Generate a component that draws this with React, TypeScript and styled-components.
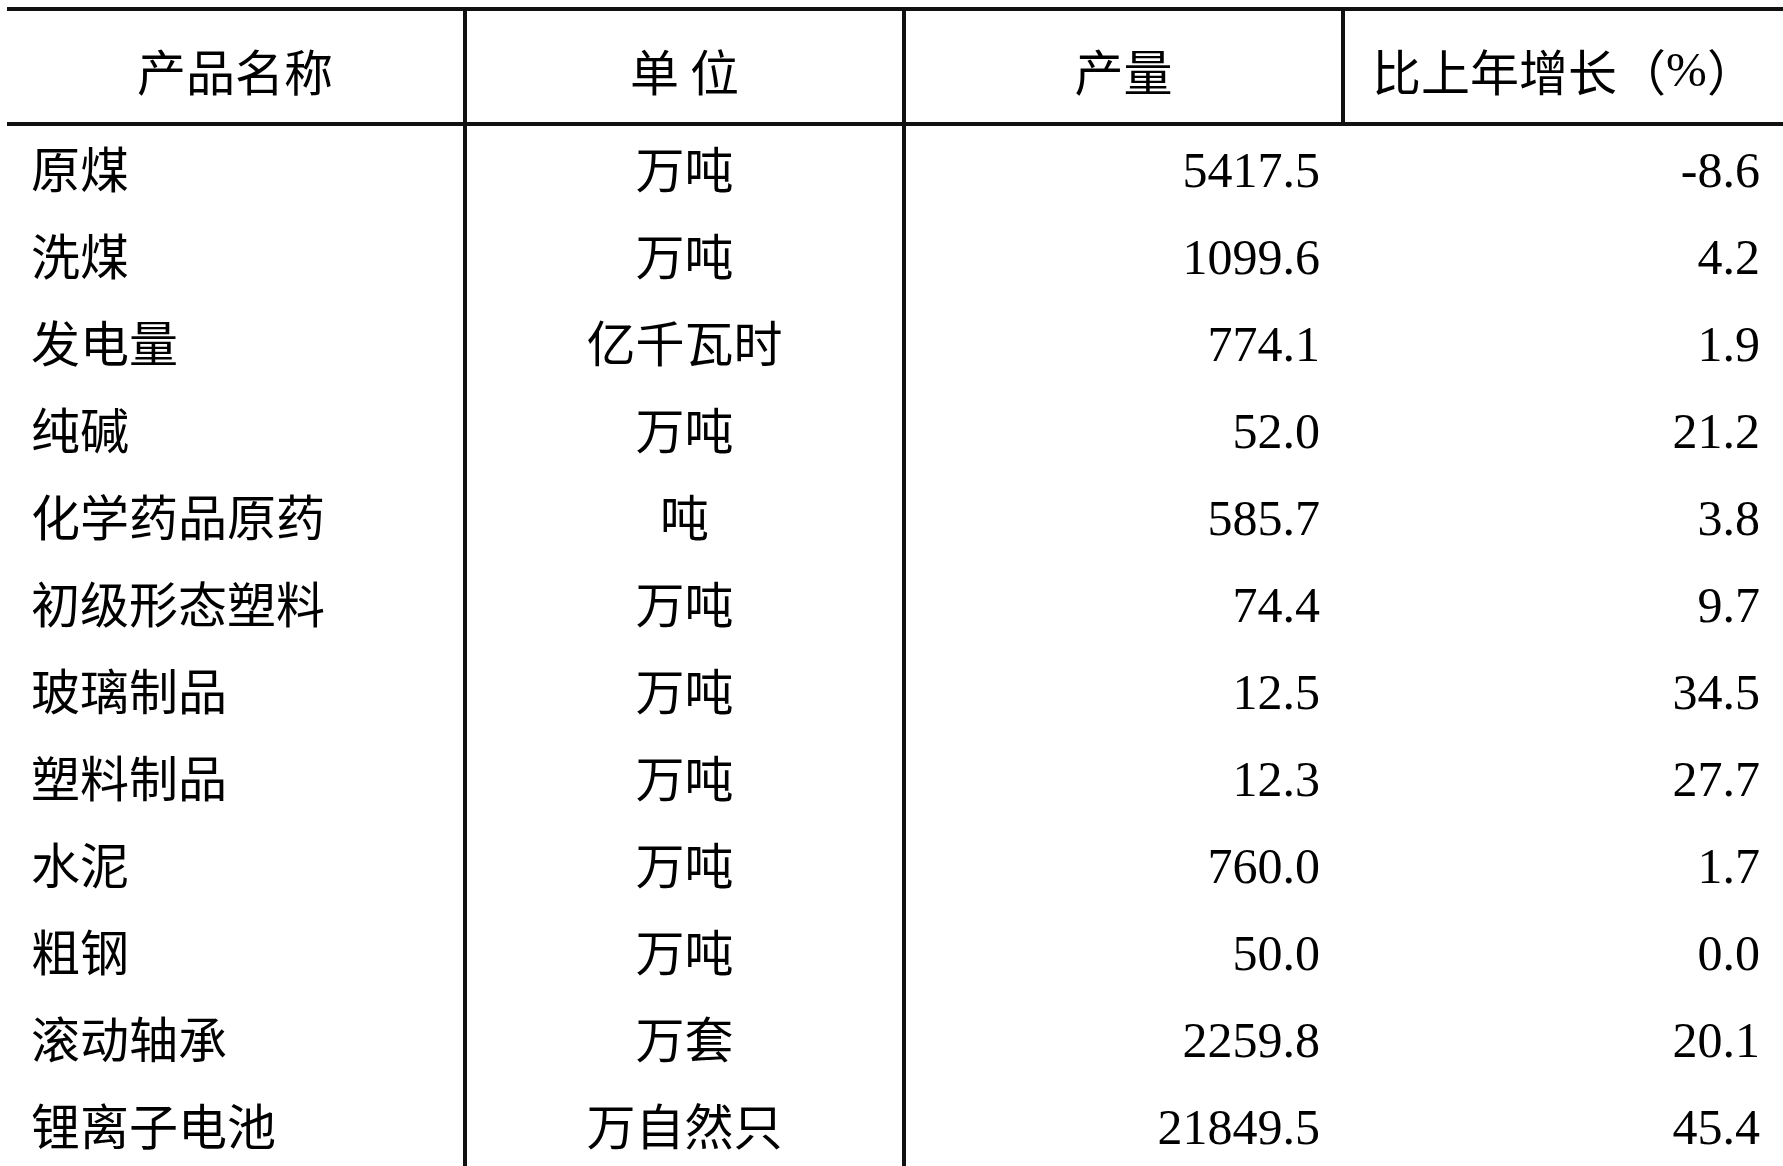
import * as React from "react";
import styled, { createGlobalStyle } from "styled-components";

const LINE = "#111";

const rows: [string, string, string, string][] = [
  ["原煤", "万吨", "5417.5", "-8.6"],
  ["洗煤", "万吨", "1099.6", "4.2"],
  ["发电量", "亿千瓦时", "774.1", "1.9"],
  ["纯碱", "万吨", "52.0", "21.2"],
  ["化学药品原药", "吨", "585.7", "3.8"],
  ["初级形态塑料", "万吨", "74.4", "9.7"],
  ["玻璃制品", "万吨", "12.5", "34.5"],
  ["塑料制品", "万吨", "12.3", "27.7"],
  ["水泥", "万吨", "760.0", "1.7"],
  ["粗钢", "万吨", "50.0", "0.0"],
  ["滚动轴承", "万套", "2259.8", "20.1"],
  ["锂离子电池", "万自然只", "21849.5", "45.4"],
];

export default function App() {
  return (
    <>
      <GlobalStyle />
      <Page>
        <Table>
          <HeaderRow>
            <HeaderCell $divider>产品名称</HeaderCell>
            <HeaderCell $divider>单 位</HeaderCell>
            <HeaderCell $divider>产量</HeaderCell>
            <HeaderCell>
              比上年增长（<Percent>%</Percent>）
            </HeaderCell>
          </HeaderRow>
          {rows.map(([name, unit, output, growth]) => (
            <Row key={name}>
              <TextCell $align="left" $divider>
                {name}
              </TextCell>
              <TextCell $align="center" $divider>
                {unit}
              </TextCell>
              <NumberCell $pad={25}>{output}</NumberCell>
              <NumberCell $pad={23}>{growth}</NumberCell>
            </Row>
          ))}
        </Table>
      </Page>
    </>
  );
}

const GlobalStyle = createGlobalStyle`
  html, body {
    margin: 0;
    padding: 0;
    overflow: hidden;
    background: #fff;
  }

  * {
    box-sizing: border-box;
  }
`;

const Page = styled.div`
  padding: 7px 0 0 7px;
  width: 100vw;
  height: 100vh;
  overflow: hidden;
  background: #fff;
`;

const Table = styled.div`
  width: 100%;
  color: #000;
`;

const Grid = styled.div`
  display: grid;
  grid-template-columns: 460px 439px 439px 1fr;
`;

const HeaderRow = styled(Grid)`
  height: 119px;
  border-top: 4px solid ${LINE};
  border-bottom: 4px solid ${LINE};
`;

const HeaderCell = styled.div<{ $divider?: boolean }>`
  display: flex;
  align-items: center;
  justify-content: center;
  padding-top: 5px;
  font-family: "Noto Sans CJK SC", sans-serif;
  font-size: 49px;
  white-space: nowrap;
  border-right: ${(p) => (p.$divider ? `4px solid ${LINE}` : "none")};
`;

const Percent = styled.span`
  font-family: "Liberation Serif", serif;
`;

const Row = styled(Grid)`
  height: 87px;
`;

const TextCell = styled.div<{ $align: "left" | "center"; $divider?: boolean }>`
  display: flex;
  align-items: center;
  justify-content: ${(p) => (p.$align === "left" ? "flex-start" : "center")};
  padding-left: ${(p) => (p.$align === "left" ? "24px" : "0")};
  padding-bottom: 6px;
  font-family: "Noto Sans CJK SC", sans-serif;
  font-size: 49px;
  line-height: 1;
  white-space: nowrap;
  border-right: ${(p) => (p.$divider ? `4px solid ${LINE}` : "none")};
`;

const NumberCell = styled.div<{ $pad: number }>`
  display: flex;
  align-items: center;
  justify-content: flex-end;
  padding-right: ${(p) => p.$pad}px;
  font-family: "Liberation Serif", serif;
  font-size: 50px;
  line-height: 1;
  white-space: nowrap;
`;
